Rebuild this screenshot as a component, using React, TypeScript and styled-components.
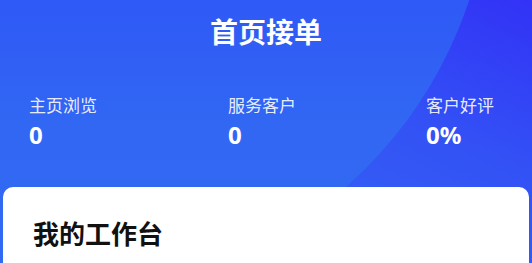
import React from "react";
import styled, { createGlobalStyle } from "styled-components";

const GlobalStyle = createGlobalStyle`
  html, body {
    margin: 0;
    padding: 0;
  }
  body {
    font-family: "Noto Sans CJK SC", "Noto Sans", sans-serif;
    background: #3366f2;
    overflow: hidden;
  }
`;

const StyledPage = styled.div`
  position: relative;
  width: 532px;
  height: 263px;
  overflow: hidden;
  background: linear-gradient(205deg, #3232f6 0%, #3352f5 35%, #3363f3 70%);
`;

// decorative lighter disc behind the header
const StyledGlow = styled.div`
  position: absolute;
  left: -369px;
  top: -565px;
  width: 860px;
  height: 860px;
  border-radius: 50%;
  background: linear-gradient(180deg, #2f55f7 62%, #3167f3 80%, #336af2 100%);
`;

const StyledHeader = styled.header`
  position: relative;
  height: 187px;
  padding-top: 11px;
  box-sizing: border-box;
`;

const StyledTitle = styled.h1`
  margin: 0;
  font-size: 28px;
  line-height: 40px;
  font-weight: 700;
  color: #ffffff;
  text-align: center;
`;

const StyledStats = styled.div`
  display: grid;
  grid-template-columns: 199px 198px 1fr;
  padding-left: 29px;
  margin-top: 42px;
`;

const StyledStat = styled.div`
  display: flex;
  flex-direction: column;
`;

const StyledLabel = styled.span`
  font-size: 17px;
  line-height: 24px;
  color: rgba(255, 255, 255, 0.9);
`;

const StyledValue = styled.span`
  margin-top: 3px;
  font-family: "Noto Sans", "Noto Sans CJK SC", sans-serif;
  font-size: 24px;
  line-height: 30px;
  font-weight: 700;
  color: #ffffff;
`;

const StyledCard = styled.section`
  position: relative;
  margin: 0 3px;
  height: 200px;
  padding: 30px 30px 0;
  box-sizing: border-box;
  background: #ffffff;
  border-radius: 10px 10px 0 0;
`;

const StyledCardTitle = styled.h2`
  margin: 0;
  font-size: 26px;
  line-height: 32px;
  font-weight: 700;
  color: #111111;
`;

type Stat = {
  label: string;
  value: string;
};

const stats: Stat[] = [
  { label: "主页浏览", value: "0" },
  { label: "服务客户", value: "0" },
  { label: "客户好评", value: "0%" },
];

const App = () => {
  return (
    <>
      <GlobalStyle />
      <StyledPage>
        <StyledGlow />
        <StyledHeader>
          <StyledTitle>首页接单</StyledTitle>
          <StyledStats>
            {stats.map((stat) => (
              <StyledStat key={stat.label}>
                <StyledLabel>{stat.label}</StyledLabel>
                <StyledValue>{stat.value}</StyledValue>
              </StyledStat>
            ))}
          </StyledStats>
        </StyledHeader>
        <StyledCard>
          <StyledCardTitle>我的工作台</StyledCardTitle>
        </StyledCard>
      </StyledPage>
    </>
  );
};

export default App;
